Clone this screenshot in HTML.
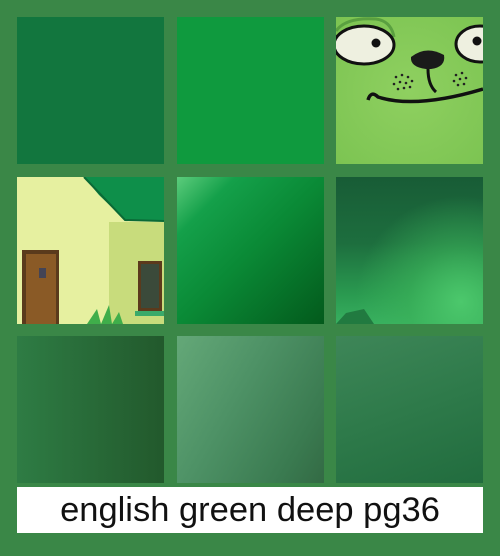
<!DOCTYPE html>
<html><head><meta charset="utf-8"><style>
html,body{margin:0;padding:0}
body{width:500px;height:556px;background:#3a8747;position:relative;overflow:hidden;font-family:"Liberation Sans",Arial,sans-serif}
.t{position:absolute;width:147px;height:147px;overflow:hidden}
.cap{position:absolute;left:17px;top:487px;width:466px;height:46px;background:#fff;text-align:center;font-size:34.5px;line-height:46px;color:#111}
</style></head><body>
<div class="t" style="left:17px;top:17px;background:#12763e"></div>
<div class="t" style="left:177px;top:17px;background:#0f9a3e"></div>
<div class="t" style="left:336px;top:17px;background:#8fcf5e">
<svg width="147" height="147" viewBox="0 0 147 147">
<defs><radialGradient id="cf" cx="0.5" cy="0.5" r="0.7"><stop offset="0" stop-color="#8fd060"/><stop offset="1" stop-color="#7cc452"/></radialGradient></defs>
<rect width="147" height="147" fill="url(#cf)"/>
<path d="M0 14 Q10 0 40 2 Q55 4 58 20" stroke="#5aa040" stroke-width="3" fill="none"/>
<ellipse cx="28" cy="28" rx="30" ry="19" fill="#eef0e0" stroke="#111" stroke-width="3"/>
<circle cx="40" cy="26" r="4.5" fill="#111"/>
<ellipse cx="144" cy="27" rx="24" ry="18" fill="#eef0e0" stroke="#111" stroke-width="3"/>
<circle cx="141" cy="24" r="4.5" fill="#111"/>
<path d="M75 40 Q90 28 108 38 Q110 50 95 52 L90 52 Q74 50 75 40Z" fill="#1a1a1a"/>
<path d="M92 52 Q92 68 100 75" stroke="#111" stroke-width="3" fill="none"/>
<path d="M32 83 Q35 73 42 80 Q80 92 147 72" stroke="#111" stroke-width="3.5" fill="none"/>
<g fill="#222"><circle cx="60" cy="60" r="1.3"/><circle cx="66" cy="58" r="1.3"/><circle cx="72" cy="60" r="1.3"/><circle cx="58" cy="67" r="1.3"/><circle cx="64" cy="65" r="1.3"/><circle cx="70" cy="66" r="1.3"/><circle cx="76" cy="64" r="1.3"/><circle cx="62" cy="72" r="1.3"/><circle cx="68" cy="71" r="1.3"/><circle cx="74" cy="70" r="1.3"/>
<circle cx="120" cy="58" r="1.3"/><circle cx="126" cy="56" r="1.3"/><circle cx="118" cy="64" r="1.3"/><circle cx="124" cy="62" r="1.3"/><circle cx="130" cy="61" r="1.3"/><circle cx="122" cy="68" r="1.3"/><circle cx="128" cy="67" r="1.3"/></g>
</svg></div>
<div class="t" style="left:17px;top:177px;background:#e4ef9c">
<svg width="147" height="147" viewBox="0 0 147 147">
<rect width="147" height="147" fill="#e6f0a0"/>
<rect x="92" y="45" width="55" height="102" fill="#c8dc7c"/>
<path d="M67 0 L147 0 L147 44 L108 43 L82 18Z" fill="#0e8f4a"/>
<path d="M67 0 L108 43 L147 44" stroke="#0a6a36" stroke-width="2" fill="none"/>
<rect x="5" y="73" width="37" height="74" fill="#5a3a1c"/>
<rect x="9" y="77" width="30" height="70" fill="#8a5a26"/>
<rect x="22" y="91" width="7" height="10" fill="#445"/>
<rect x="121" y="84" width="24" height="50" fill="#5b3a1c"/>
<rect x="124" y="87" width="18" height="44" fill="#3b4a3a"/>
<rect x="118" y="134" width="29" height="5" fill="#3aaa6a"/>
<path d="M70 147 L80 132 L84 147 L92 128 L95 147 L102 135 L106 147Z" fill="#3fae4a"/>
</svg></div>
<div class="t" style="left:177px;top:177px;background:linear-gradient(135deg,#5ccc7c 0%,#14a04a 20%,#0a8a36 50%,#035a1c 100%)"></div>
<div class="t" style="left:336px;top:177px;background:radial-gradient(ellipse at 85% 85%,#4cc86c 0%,rgba(60,180,90,0.6) 30%,rgba(40,140,70,0) 60%),linear-gradient(180deg,#185c36 0%,#1d6e3e 45%,#2a9a50 80%,#38b060 100%)">
<svg width="147" height="147" style="position:absolute;left:0;top:0"><path d="M0 147 L10 136 L28 132 L38 147Z" fill="#217a40"/></svg></div>
<div class="t" style="left:17px;top:336px;background:linear-gradient(90deg,#2e7c44,#22592c)"></div>
<div class="t" style="left:177px;top:336px;background:linear-gradient(120deg,#64a878 0%,#4e9266 40%,#3a7a50 80%,#336a44 100%)"></div>
<div class="t" style="left:336px;top:336px;background:linear-gradient(160deg,#3e8658 0%,#2e7a4a 50%,#216c3e 100%)"></div>
<div class="cap">english green deep pg36</div>
</body></html>
